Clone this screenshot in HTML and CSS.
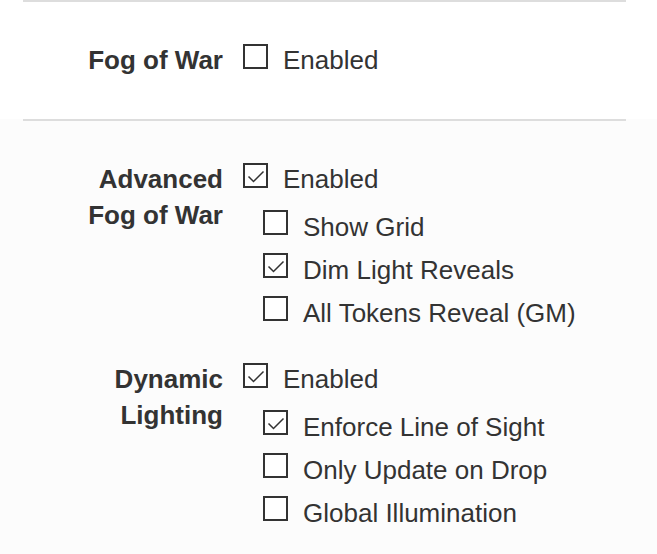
FILE: index.html
```html
<!DOCTYPE html>
<html lang="en">
<head>
<meta charset="utf-8">
<title>Page Settings</title>
<link rel="stylesheet" href="styles.css">
</head>
<body>
<div class="page">
  <div class="block">
    <div class="inner first">
      <div class="setting">
        <div class="label">Fog of War</div>
        <div class="options">
          <div class="opt"><span class="box"></span><span class="text">Enabled</span></div>
        </div>
      </div>
    </div>
  </div>
  <div class="block shaded">
    <div class="inner second">
      <div class="setting">
        <div class="label">Advanced<br>Fog of War</div>
        <div class="options">
          <div class="opt"><span class="box"><svg viewBox="0 0 21 21" width="21" height="21"><path d="M3.5 11.5 L8.5 16.5 L18.5 6.5" fill="none" stroke="#333" stroke-width="1.5"/></svg></span><span class="text">Enabled</span></div>
          <div class="subs">
            <div class="opt"><span class="box"></span><span class="text">Show Grid</span></div>
            <div class="opt"><span class="box"><svg viewBox="0 0 21 21" width="21" height="21"><path d="M3.5 11.5 L8.5 16.5 L18.5 6.5" fill="none" stroke="#333" stroke-width="1.5"/></svg></span><span class="text">Dim Light Reveals</span></div>
            <div class="opt"><span class="box"></span><span class="text">All Tokens Reveal (GM)</span></div>
          </div>
        </div>
      </div>
      <div class="setting">
        <div class="label">Dynamic<br>Lighting</div>
        <div class="options">
          <div class="opt"><span class="box"><svg viewBox="0 0 21 21" width="21" height="21"><path d="M3.5 11.5 L8.5 16.5 L18.5 6.5" fill="none" stroke="#333" stroke-width="1.5"/></svg></span><span class="text">Enabled</span></div>
          <div class="subs">
            <div class="opt"><span class="box"><svg viewBox="0 0 21 21" width="21" height="21"><path d="M3.5 11.5 L8.5 16.5 L18.5 6.5" fill="none" stroke="#333" stroke-width="1.5"/></svg></span><span class="text">Enforce Line of Sight</span></div>
            <div class="opt"><span class="box"></span><span class="text">Only Update on Drop</span></div>
            <div class="opt"><span class="box"></span><span class="text">Global Illumination</span></div>
          </div>
        </div>
      </div>
    </div>
  </div>
</div>
</body>
</html>
```

FILE: styles.css
```css
html, body {
  margin: 0;
  padding: 0;
  background: #ffffff;
}

body {
  font-family: "Liberation Sans", Arial, sans-serif;
  font-size: 26px;
  color: #333333;
  overflow: hidden;
}

.page {
  width: 657px;
  height: 554px;
  display: flex;
  flex-direction: column;
}

.block {
  background: #ffffff;
}

.block.shaded {
  background: #fcfcfc;
  flex: 1;
}

.inner {
  margin: 0 31px 0 23px;
  border-top: 2px solid #dddddd;
}

.inner.first {
  padding: 40px 0 41px;
}

.inner.second {
  padding-top: 40px;
  display: flex;
  flex-direction: column;
  gap: 27px;
}

.setting {
  display: grid;
  grid-template-columns: 200px auto;
  column-gap: 20px;
}

.label {
  text-align: right;
  font-weight: bold;
  line-height: 36px;
}

.options {
  display: flex;
  flex-direction: column;
}

.opt {
  display: flex;
  align-items: center;
  height: 36px;
}

.subs {
  margin-top: 8px;
  padding-left: 20px;
  display: flex;
  flex-direction: column;
}

.subs .opt {
  height: 43px;
}

.box {
  width: 25px;
  height: 25px;
  box-sizing: border-box;
  border: 2px solid #333333;
  background: #ffffff;
  margin-right: 15px;
  margin-bottom: 8px;
  flex: none;
  display: flex;
}

.box svg {
  display: block;
}

.text {
  line-height: 36px;
  white-space: nowrap;
}
```
